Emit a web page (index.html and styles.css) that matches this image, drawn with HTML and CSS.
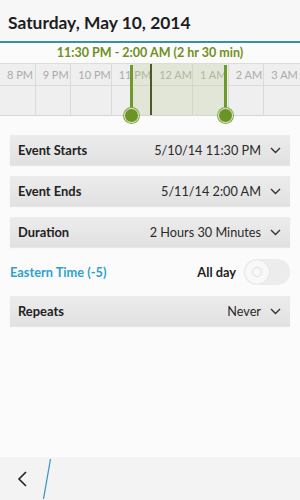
FILE: index.html
```html
<!DOCTYPE html>
<html>
<head>
<meta charset="utf-8">
<link rel="stylesheet" href="styles.css">
</head>
<body>
<div class="screen">
  <header class="header"><h1 class="title">Saturday, May 10, 2014</h1></header>
  <div class="range">11:30 PM - 2:00 AM (2 hr 30 min)</div>
  <div class="timeline">
    <div class="cell head">8 PM</div>
    <div class="cell head">9 PM</div>
    <div class="cell head">10 PM</div>
    <div class="cell head">11 PM</div>
    <div class="cell head">12 AM</div>
    <div class="cell head">1 AM</div>
    <div class="cell head">2 AM</div>
    <div class="cell head">3 AM</div>
    <div class="cell"></div><div class="cell"></div><div class="cell"></div><div class="cell"></div>
    <div class="cell"></div><div class="cell"></div><div class="cell"></div><div class="cell"></div>
    <div class="selection"></div>
    <div class="midnight"></div>
    <div class="handle handle-start"><span class="knob"></span></div>
    <div class="handle handle-end"><span class="knob"></span></div>
  </div>
  <main class="form">
    <div class="field">
      <span class="label">Event Starts</span>
      <span class="value">5/10/14 11:30 PM</span>
      <svg class="chev" width="11" height="7" viewBox="0 0 11 7"><polyline points="1,1 5.5,5.5 10,1" fill="none" stroke="#333" stroke-width="1.4"/></svg>
    </div>
    <div class="field">
      <span class="label">Event Ends</span>
      <span class="value">5/11/14 2:00 AM</span>
      <svg class="chev" width="11" height="7" viewBox="0 0 11 7"><polyline points="1,1 5.5,5.5 10,1" fill="none" stroke="#333" stroke-width="1.4"/></svg>
    </div>
    <div class="field">
      <span class="label">Duration</span>
      <span class="value">2 Hours 30 Minutes</span>
      <svg class="chev" width="11" height="7" viewBox="0 0 11 7"><polyline points="1,1 5.5,5.5 10,1" fill="none" stroke="#333" stroke-width="1.4"/></svg>
    </div>
    <div class="tzrow">
      <span class="tz">Eastern Time (-5)</span>
      <span class="allday">All day</span>
      <span class="toggle"><span class="toggle-knob"></span></span>
    </div>
    <div class="field">
      <span class="label">Repeats</span>
      <span class="value">Never</span>
      <svg class="chev" width="11" height="7" viewBox="0 0 11 7"><polyline points="1,1 5.5,5.5 10,1" fill="none" stroke="#333" stroke-width="1.4"/></svg>
    </div>
  </main>
  <footer class="bar">
    <svg class="back" width="12" height="18" viewBox="0 0 12 18"><polyline points="9,2 2,9 9,16" fill="none" stroke="#222" stroke-width="1.6"/></svg>
    <svg class="divider" width="10" height="42" viewBox="0 0 10 42"><line x1="8.5" y1="1" x2="1.5" y2="41" stroke="#3a9ac4" stroke-width="1.3"/></svg>
  </footer>
</div>
</body>
</html>
```
FILE: styles.css
```css
* { box-sizing: border-box; }
html, body { margin: 0; padding: 0; }
body {
  width: 300px;
  height: 500px;
  background: #fbfbfb;
  font-family: Lato, "Open Sans", "Liberation Sans", sans-serif;
  color: #222;
  overflow: hidden;
}
.screen {
  height: 500px;
  display: flex;
  flex-direction: column;
}
.header {
  height: 43px;
  background: #f7f7f7;
  border-bottom: 2px solid #3b8ea8;
  display: flex;
  align-items: center;
  padding: 3px 0 0 8px;
}
.title {
  margin: 0;
  font-size: 17.4px;
  font-weight: 700;
  color: #1e1e1e;
}
.range {
  height: 20px;
  line-height: 19px;
  text-align: center;
  font-size: 12.5px;
  font-weight: 700;
  color: #6f8f22;
}
.timeline {
  position: relative;
  display: grid;
  grid-template-columns: repeat(8, 1fr);
  grid-template-rows: 22px 30px;
  background: #efefef;
  border-top: 1px solid #dcdcdc;
  border-bottom: 1px solid #d6d6d6;
  height: 53px;
}
.cell {
  border-right: 1px solid #dadada;
  border-bottom: 1px solid #dadada;
}
.cell:nth-child(8), .cell:nth-child(16) { border-right: none; }
.cell:nth-child(n+9) { border-bottom: none; }
.head {
  font-size: 11px;
  color: #ababab;
  padding: 4px 0 0 7px;
  white-space: nowrap;
}
.selection {
  position: absolute;
  left: 131px;
  width: 94px;
  top: 0;
  bottom: 0;
  background: rgba(195, 208, 150, 0.28);
}
.midnight {
  position: absolute;
  left: 150px;
  top: 0;
  bottom: 0;
  width: 1.5px;
  background: #4a5a2a;
}
.handle {
  position: absolute;
  top: 1px;
  bottom: -2px;
  width: 3px;
  margin-left: -1.5px;
  background: #6e9a2c;
}
.handle-start { left: 131px; }
.handle-end { left: 225px; }
.knob {
  position: absolute;
  left: 50%;
  bottom: -6px;
  width: 15px;
  height: 15px;
  margin-left: -7.5px;
  border-radius: 50%;
  background: #6a9426;
  border: 1.5px solid #e7efd5;
  box-shadow: 0 0 0 1px #8aa84e;
}
.form {
  flex: 1;
  padding: 19px 10px 0;
  display: flex;
  flex-direction: column;
}
.field {
  height: 30px;
  margin-bottom: 11px;
  display: flex;
  align-items: center;
  padding: 0 9px 0 8px;
  background: linear-gradient(#ececec, #e1e1e1);
  box-shadow: 0 1px 1px rgba(0,0,0,0.08);
  font-size: 12.7px;
}
.label {
  font-weight: 700;
  color: #222;
  flex: 1;
  font-size: 12.9px;
}
.value {
  color: #2a2a2a;
  margin-right: 9px;
}
.chev { display: block; }
.tzrow {
  height: 26px;
  margin: 1px 0 11px;
  display: flex;
  align-items: center;
  font-size: 12.8px;
  font-weight: 700;
}
.tz {
  color: #2ea2cf;
  flex: 1;
}
.allday {
  color: #1e1e1e;
  margin-right: 8px;
}
.toggle {
  width: 46px;
  height: 26px;
  border-radius: 13px;
  background: #ececec;
  position: relative;
  display: block;
}
.toggle-knob {
  position: absolute;
  left: 1px;
  top: 1px;
  width: 24px;
  height: 24px;
  border-radius: 50%;
  background: #f8f8f8;
  box-shadow: 0 0 1px rgba(0,0,0,0.15);
}
.toggle-knob::after {
  content: "";
  position: absolute;
  left: 7px;
  top: 7px;
  width: 10px;
  height: 10px;
  border-radius: 50%;
  border: 1.5px solid #dcdcdc;
  box-sizing: border-box;
}
.bar {
  height: 43px;
  background: #f3f3f3;
  display: flex;
  align-items: center;
  padding-left: 17px;
}
.back { display: block; margin-right: 13px; }
.divider { display: block; }
```
